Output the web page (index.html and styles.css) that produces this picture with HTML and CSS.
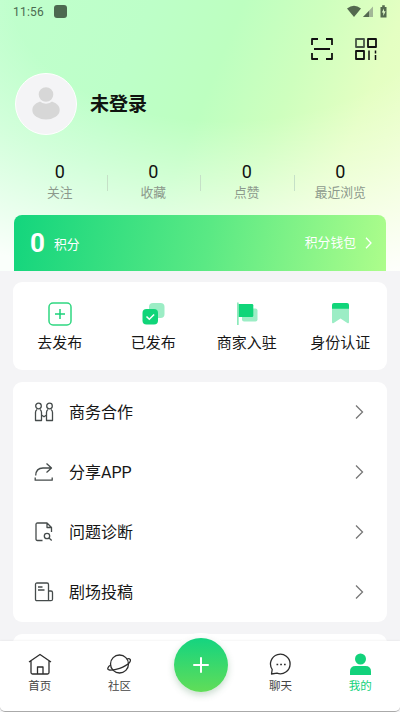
FILE: index.html
```html
<!DOCTYPE html>
<html lang="zh-CN">
<head>
<meta charset="utf-8">
<meta name="viewport" content="width=device-width, initial-scale=1">
<title>我的</title>
<link rel="stylesheet" href="styles.css">
</head>
<body>
<div class="screen">
  <header class="hero">
    <div class="status">
      <span class="clock">11:56</span><i class="app-dot"></i>
      <svg class="signals" width="42" height="14" viewBox="0 0 42 14"><path d="M0 4.400Q7-1 14 4.400L7 13z" fill="#53694f"/><path d="M26 2.500v10.500H16z" fill="#a2b797"/><path d="M22 7v6h-6z" fill="#53694f"/><path d="M33.500 3h1.700V1.200h2.600V3h1.700v10.500h-6z" fill="#53694f"/><path d="m37 4.500-2.200 4h1.500V12l2.300-4.700H37z" fill="#e0fac9"/></svg>
    </div>
    <div class="tools">
      <svg width="22" height="22" viewBox="0 0 22 22" class="dark"><path d="M1 7V1h6M15 1h6v6M21 15v6h-6M7 21H1v-6M3 11h16"/></svg>
      <svg width="22" height="22" viewBox="0 0 22 22" class="dark"><path d="M1 1h8v8H1z" stroke="#465545"/><path d="M13 1h8v8h-8zM1 13h8v8H1z"/><path d="M14 12.500V22M20.500 12.500V15.500M20.500 17v5" stroke-width="1.500"/></svg>
    </div>
    <div class="profile">
      <div class="avatar"><svg width="28" height="33" viewBox="0 0 28 33"><ellipse cx="14" cy="23" rx="13.700" ry="9.500" fill="#d7d7d7"/><circle cx="14" cy="7.500" r="8.300" fill="#d7d7d7" stroke="#f4f4f6" stroke-width="2"/></svg></div>
      <h1>未登录</h1>
    </div>
    <div class="stats">
      <div class="stat"><b>0</b><span>关注</span></div>
      <div class="stat"><b>0</b><span>收藏</span></div>
      <div class="stat"><b>0</b><span>点赞</span></div>
      <div class="stat"><b>0</b><span>最近浏览</span></div>
    </div>
    <div class="points">
      <strong>0</strong><span class="unit">积分</span><span class="wallet">积分钱包</span>
      <svg width="7" height="12" viewBox="0 0 7 12"><path d="m1 .8 5 5.200-5 5.200" fill="none" stroke="#fff" stroke-width="1.300"/></svg>
    </div>
  </header>

  <section class="card actions">
    <div class="action"><svg width="26" height="26" viewBox="0 0 26 26"><rect x="2" y="2" width="22" height="22" rx="4" fill="none" stroke="#2fd781" stroke-width="1.500"/><path d="M13 8v10M8 13h10" stroke="#1ad27a" stroke-width="1.500"/></svg><span>去发布</span></div>
    <div class="action"><svg width="26" height="26" viewBox="0 0 26 26"><rect x="9" y="2" width="15.500" height="15" rx="4" fill="#9cedc5"/><rect x="2.500" y="8" width="15.500" height="15.500" rx="4" fill="#10d579"/><path d="m6.500 15.500 2.800 2.800 4.800-4.800" fill="none" stroke="#fff" stroke-width="1.500"/></svg><span>已发布</span></div>
    <div class="action"><svg width="26" height="26" viewBox="0 0 26 26"><rect x="8" y="7.500" width="15.500" height="13" rx="2" fill="#9cedc5"/><path d="M3 1.500h1.700v22.500H3z" fill="#8ceabb"/><path d="M4.700 3H18q1.300 0 1.300 1.300v10.400q0 1.300-1.300 1.300H4.700z" fill="#10d579"/></svg><span>商家入驻</span></div>
    <div class="action"><svg width="26" height="26" viewBox="0 0 26 26"><path d="M5 7h17v14q0 2-1.700 1L13.500 17.500 6.700 22Q5 23 5 21z" fill="#9cedc5"/><path d="M5 7.700V4q0-2 2-2h13q2 0 2 2v3.700z" fill="#10d579"/></svg><span>身份认证</span></div>
  </section>

  <section class="card menu">
    <div class="row"><svg class="ico" width="20" height="20" viewBox="0 0 20 20"><circle cx="4.500" cy="4" r="2.800"/><circle cx="15.500" cy="4" r="2.800"/><path d="M3 7.500Q1.500 8.500 1.500 10.500v8h6v-8Q7.500 8.500 6 7.500M14 7.500q-1.500 1-1.500 3v8h6v-8q0-2-1.500-3M7.500 13l2.500 1.800 2.500-1.800"/></svg><span>商务合作</span><svg class="chev" width="9" height="14" viewBox="0 0 9 14"><path d="m1 .5 6.500 6.500L1 13.500"/></svg></div>
    <div class="row"><svg class="ico" width="20" height="20" viewBox="0 0 20 20"><path d="M1.700 13.500Q2 6 9 6h8M12.500 1.500 17.500 6l-5 4.500M1.200 15.500v2.700h17v-2.700"/></svg><span>分享APP</span><svg class="chev" width="9" height="14" viewBox="0 0 9 14"><path d="m1 .5 6.500 6.500L1 13.500"/></svg></div>
    <div class="row"><svg class="ico" width="20" height="20" viewBox="0 0 20 20"><path d="M8.500 18.500H3.500q-1.500 0-1.500-1.500V2.500Q2 1 3.500 1H13l4.500 4.500V10M13 1v4.500h4.500"/><circle cx="13" cy="14" r="2.700"/><path d="m15 16 2.700 2.500"/></svg><span>问题诊断</span><svg class="chev" width="9" height="14" viewBox="0 0 9 14"><path d="m1 .5 6.500 6.500L1 13.500"/></svg></div>
    <div class="row"><svg class="ico" width="20" height="20" viewBox="0 0 20 20"><path d="M15 18.700H3q-1.500 0-1.500-1.500V2.500Q1.500 1 3 1h10q1.500 0 1.500 1.500v16.200M14.500 9H17q1.500 0 1.500 1.500v6.700q0 1.500-1.500 1.500h-2M4 5H8.500M4 8h6.500"/></svg><span>剧场投稿</span><svg class="chev" width="9" height="14" viewBox="0 0 9 14"><path d="m1 .5 6.500 6.500L1 13.500"/></svg></div>
  </section>
  <section class="card next"></section>

  <nav class="tabbar">
    <div class="tab"><svg width="24" height="24" viewBox="0 0 24 24"><path d="M1 10 12 2.500 23 10M3 9v11.500q0 1.500 1.500 1.500h15q1.500 0 1.500-1.500V9M9.500 22v-7h5.500v7"/></svg><span>首页</span></div>
    <div class="tab"><svg width="24" height="24" viewBox="0 0 24 24"><circle cx="12.500" cy="12" r="9"/><path d="M3.700 13C.5 14.500-.3 18 2.500 18c5 .5 15.500-2.500 20-7.500 2-2.500.5-4.700-2.700-3.500"/></svg><span>社区</span></div>
    <div class="tab publish"><div class="fab"><svg width="18" height="18" viewBox="0 0 18 18"><path d="M9 2v14M2 9h14" stroke="#fff" stroke-width="2" stroke-linecap="round"/></svg></div></div>
    <div class="tab"><svg width="24" height="24" viewBox="0 0 24 24"><path d="M3.200 17.500A9.800 9.800 0 1 1 8 21.200L2.500 22Z"/><path d="M7.500 12.500h1.700M11.200 12.500h1.700M15 12.500h1.700" stroke-width="1.700"/></svg><span>聊天</span></div>
    <div class="tab active"><svg width="24" height="24" viewBox="0 0 24 24"><circle cx="12.500" cy="7" r="5.500"/><path d="M2 23v-3.500Q2 14 7.500 14h10q5.500 0 5.500 5.500V23z"/></svg><span>我的</span></div>
  </nav>
</div>
</body>
</html>
```
FILE: styles.css
```css
* { box-sizing: border-box; }
body { margin: 0; background: #f4f4f6; font-family: Roboto, "Noto Sans CJK SC", sans-serif; color: #161616; }
svg { display: block; flex: none; }
.screen { position: relative; width: 400px; height: 712px; overflow: hidden; background: #f4f4f6; }
.hero {
  height: 271px;
  padding: 0 14px;
  background:
    radial-gradient(ellipse 480px 275px at 225px 0, rgba(255,255,255,0) 44%, rgba(255,255,255,.3) 65%, rgba(255,255,255,.93) 104%),
    linear-gradient(112deg, #c0ffcd 0%, #bdffc8 30%, #bdffc0 48%, #ceffbe 64%, #e4ffc2 80%, #edffc8 100%);
}
.status { display: flex; align-items: center; height: 22px; margin: 0 -1px; color: #4c6b51; }
.clock { width: 41px; font-size: 12px; letter-spacing: .2px; padding-top: 1px; }
.app-dot { width: 13px; height: 13px; border-radius: 3px; background: #4c6950; }
.signals { margin-left: auto; margin-right: -2px; }
.tools { display: flex; justify-content: flex-end; gap: 22px; padding: 16px 9px 0 0; }
.dark { fill: none; stroke: #111; stroke-width: 1.8; stroke-linejoin: round; }
.profile { display: flex; align-items: center; gap: 13px; height: 62px; margin-top: 13px; padding-left: 1px; }
.avatar { display: flex; align-items: center; justify-content: center; width: 62px; height: 62px; padding-bottom: 1px; border: 1.5px solid #fff; border-radius: 50%; background: #f4f4f6; }
h1 { margin: 0; padding-top: 1px; font-size: 19px; line-height: 26px; font-weight: 700; color: #101410; }
.stats { display: flex; margin: 26px -1px 0; height: 54px; }
.stat { position: relative; flex: 1; display: flex; flex-direction: column; align-items: center; }
.stat b { font-size: 18px; line-height: 22px; font-weight: 400; color: #111; }
.stat span { font-size: 12.8px; line-height: 20px; color: #8c998c; }
.stat + .stat::before { content: ""; position: absolute; left: 0; top: 14px; width: 1px; height: 16px; background: #c5e0c7; }
.points { display: flex; align-items: center; height: 56px; padding: 0 14px 0 16px; border-radius: 8px 8px 0 0; color: #fff; background: linear-gradient(100deg, #13d57d, #5ae984 52%, #adfd8b); }
.points strong { width: 24px; font-size: 26px; }
.unit { font-size: 12.8px; }
.wallet { margin-left: auto; margin-right: 9px; padding-bottom: 3px; font-size: 12.8px; }
.card { margin: 0 13px 12px; border-radius: 9px; background: #fff; }
.actions { display: flex; height: 88px; margin-top: 11px; padding-top: 19px; }
.action { flex: 1; display: flex; flex-direction: column; align-items: center; gap: 5px; }
.action span { font-size: 15px; line-height: 22px; }
.menu { height: 240px; }
.row { display: flex; align-items: center; height: 60px; padding: 0 23px 0 21px; }
.row span { flex: 1; margin-left: 15px; padding-top: 1px; font-size: 16px; line-height: 24px; }
.ico { fill: none; stroke: #454b4b; stroke-width: 1.3; stroke-linejoin: round; }
.chev { fill: none; stroke: #777; stroke-width: 1.3; }
.next { height: 78px; }
.tabbar { position: absolute; left: 0; right: 0; bottom: 0; height: 71px; display: flex; background: #fff; border-bottom: 1px solid #aaa; border-radius: 0 0 5px 5px; box-shadow: 0 -1px 2px rgba(0,0,0,.04); }
.tab { flex: 1; display: flex; flex-direction: column; align-items: center; padding-top: 11px; }
.tab > svg { fill: none; stroke: #2d2d2d; stroke-width: 1.3; stroke-linejoin: round; }
.tab span { font-size: 11.5px; line-height: 20px; color: #444; }
.tab.active > svg { fill: #12d27b; stroke: none; }
.tab.active span { color: #12d27b; }
.tab.publish { padding: 0 0 0 2px; }
.fab { display: flex; align-items: center; justify-content: center; width: 54px; height: 54px; margin-top: -3px; border-radius: 50%; background: linear-gradient(#14d480, #61dd58); box-shadow: 0 3px 7px rgba(40,110,60,.25), 0 0 0 5px #fff; }
```
